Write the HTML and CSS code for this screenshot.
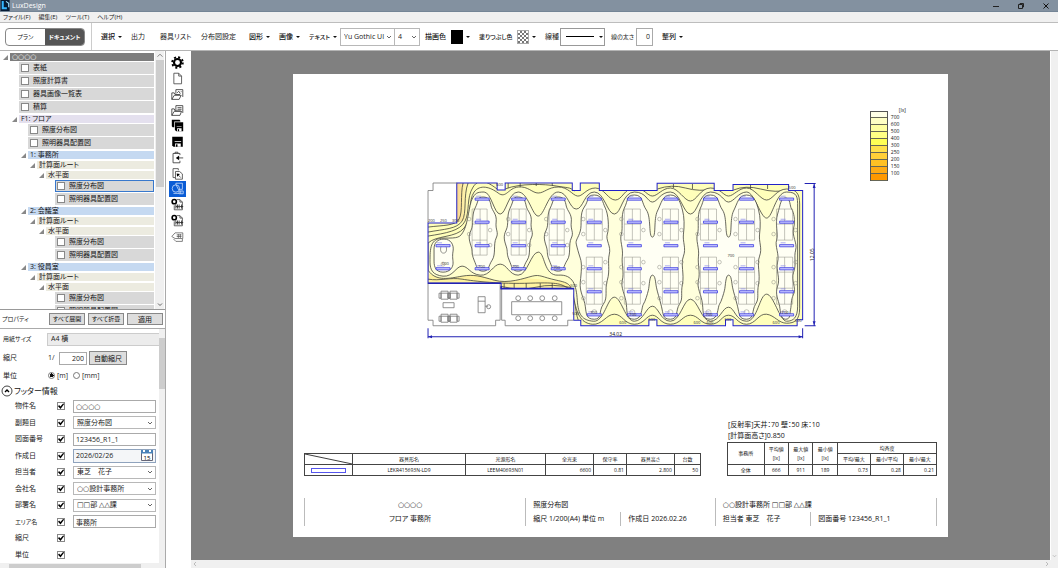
FILE: index.html
```html
<!DOCTYPE html>
<html lang="ja">
<head>
<meta charset="utf-8">
<title>LuxDesign</title>
<link rel="stylesheet" href="styles.css">
</head>
<body>
<svg class="defs" aria-hidden="true">
  <defs>
    <symbol id="chev" viewBox="0 0 6 6"><path d="M1 2l2 2 2-2" fill="none" stroke="#555" stroke-width=".9"/></symbol>
    <symbol id="chev-up" viewBox="0 0 6 6"><path d="M.5 4.2L3 1.7l2.500 2.500" fill="none" stroke="#777" stroke-width=".9"/></symbol>
    <symbol id="gear" viewBox="0 0 16 16"><g fill="none" stroke="#000"><circle cx="8" cy="8" r="4.300" stroke-width="2.600"/><circle cx="8" cy="8" r="6.500" stroke-width="2.400" stroke-dasharray="2.500 2.605"/></g></symbol>
    <symbol id="page" viewBox="0 0 16 16"><path d="M3.500 1.500h6l3.500 3.500v9.500H3.500zM9.500 1.500V5H13" fill="none" stroke="#444"/></symbol>
    <symbol id="folder-img" viewBox="0 0 16 16"><path d="M6 7V2h8.500v9M1 14V6h3l1 2h6M1 14l3-5h8.500l-2.500 5zM7.500 6l2-2 2 3M12 4.500h1" fill="none" stroke="#333"/></symbol>
    <symbol id="folder-doc" viewBox="0 0 16 16"><path d="M6 8V2h8.500v9M8 4.500h5M8 6.500h5M1 14V6h3l1 2.500h7M1 14l3-5h9l-2 5z" fill="none" stroke="#333"/></symbol>
    <symbol id="saves" viewBox="0 0 16 16"><path d="M1 1h9.500l1 1v1H4v7H2L1 9z"/><path d="M4.800 4H15v11H6.500l-1.700-1.500z"/><path d="M7.500 11.500H13V15H7.500zM7 8.500h6v.8H7z" fill="#fff"/><path d="M8.500 12.500H10V15H8.500z"/></symbol>
    <symbol id="save" viewBox="0 0 16 16"><path d="M1.500 2h13v12.500H3L1.500 13z"/><path d="M5 10.500h7v4H5zM4.500 7.500h8v.8h-8z" fill="#fff"/><path d="M6 11.500h2v3H6z"/></symbol>
    <symbol id="import" viewBox="0 0 16 16"><path d="M11 5V3H2.500v11.500H11V12M5 3V1.500h3.500V3M15 8.500H7" fill="none" stroke="#333"/><path d="M6 8.500l4-3v6z"/></symbol>
    <symbol id="export" viewBox="0 0 16 16"><path d="M2.500 13V2H9v2M2.500 13H5M5.500 15V5.500h5l3.500 3V15zM12 13L8.500 9.500" fill="none" stroke="#444"/><path d="M7 8l4 .5L7.500 12z"/></symbol>
    <symbol id="shapes" viewBox="0 0 16 16"><g fill="none" stroke="#dbe9ff" stroke-width=".9"><circle cx="6" cy="8" r="4.500"/><path d="M6 3V1.500h8V9H9zM3 14h7M10 11h5v3.500h-5zM12 11v3.500"/></g></symbol>
    <symbol id="plus-lux" viewBox="0 0 16 16"><circle cx="4" cy="4.500" r="2.600" fill="none" stroke="#000" stroke-width="2"/><path d="M7 2h4l3 3v9.500H4V9M11 2v3h3" fill="none" stroke="#444"/><path d="M6 8v5M8 8v5M10 8v2M10 11v2M13 8v5M6 10.500h9" fill="none" stroke="#222"/></symbol>
    <symbol id="tag" viewBox="0 0 16 16"><path d="M1 8l4-4.500h9.500v7H5zM3 11l3 3h8v-3M7 6h6M7 8h6M9 5v5M11.500 5v5" fill="none" stroke="#555" stroke-width=".9"/></symbol>
  </defs>
</svg>

<header class="titlebar">
  <svg class="logo" viewBox="0 0 11 12"><path d="M0 0h10v12H0z" fill="#061a33"/><path d="M2.500 1v8H7" fill="none" stroke="#35b5ff" stroke-width="2.200"/><path d="M6 1.500l3 2V8" fill="none" stroke="#9fe0ff" stroke-width="1.200"/></svg>
  <span class="title">LuxDesign</span>
  <span class="window-buttons">
    <button aria-label="最小化"><svg viewBox="0 0 8 8"><path d="M1 4.500h6" stroke="#222"/></svg></button>
    <button aria-label="最大化"><svg viewBox="0 0 8 8"><path d="M1.500 2.500h4v4h-4zM3 2.500v-1h3.500V5h-1" fill="none" stroke="#222"/></svg></button>
    <button aria-label="閉じる"><svg viewBox="0 0 8 8"><path d="M1.500 1.500l5 5M6.500 1.500l-5 5" stroke="#111"/></svg></button>
  </span>
</header>

<nav class="menubar">
  <button>ファイル(F)</button><button>編集(E)</button><button>ツール(T)</button><button>ヘルプ(H)</button>
</nav>

<div class="toolbar">
  <div class="mode"><button>プラン</button><button class="on">ドキュメント</button></div>
  <div class="tools">
    <button class="drop strong">選択</button>
    <button>出力</button>
    <button>器具リスト</button>
    <button>分布図設定</button>
    <button class="drop strong">図形</button>
    <button class="drop strong">画像</button>
    <button class="drop strong kana">テキスト</button>
    <span class="combo"><select aria-label="フォント"><option>Yu Gothic UI</option></select><svg><use href="#chev"/></svg></span>
    <span class="combo size"><select aria-label="文字サイズ"><option>4</option></select><svg><use href="#chev"/></svg></span>
    <span class="strong">描画色</span>
    <button class="drop" aria-label="描画色"><i class="swatch black"></i></button>
    <span class="strong kana">塗りつぶし色</span>
    <button class="drop" aria-label="塗りつぶし色"><i class="swatch clear"></i></button>
    <span>線種</span>
    <button class="drop line-kind" aria-label="線種"><i></i></button>
    <label for="weight" class="kana">線の太さ</label>
    <input id="weight" class="field weight" value="0">
    <button class="drop strong">整列</button>
  </div>
</div>

<main class="work">
  <aside class="side">
    <div class="tree-pane">
      <ul class="tree">
        <li><div class="row root open"><span>○○○○</span></div>
          <ul>
            <li><label class="row leaf"><span><input type="checkbox">表紙</span></label></li>
            <li><label class="row leaf"><span><input type="checkbox">照度計算書</span></label></li>
            <li><label class="row leaf"><span><input type="checkbox">器具画像一覧表</span></label></li>
            <li><label class="row leaf"><span><input type="checkbox">積算</span></label></li>
            <li><div class="row open floor"><span>F1: フロア</span></div>
              <ul>
                <li><label class="row leaf"><span><input type="checkbox">照度分布図</span></label></li>
                <li><label class="row leaf"><span><input type="checkbox">照明器具配置図</span></label></li>
                <li><div class="row open room"><span>1: 事務所</span></div>
                  <ul><li><div class="row open plane"><span>計算面ルート</span></div>
                    <ul><li><div class="row open plane"><span>水平面</span></div>
                      <ul>
                        <li><label class="row leaf selected"><span><input type="checkbox">照度分布図</span></label></li>
                        <li><label class="row leaf"><span><input type="checkbox">照明器具配置図</span></label></li>
                      </ul></li></ul></li></ul></li>
                <li><div class="row open room"><span>2: 会議室</span></div>
                  <ul><li><div class="row open plane"><span>計算面ルート</span></div>
                    <ul><li><div class="row open plane"><span>水平面</span></div>
                      <ul>
                        <li><label class="row leaf"><span><input type="checkbox">照度分布図</span></label></li>
                        <li><label class="row leaf"><span><input type="checkbox">照明器具配置図</span></label></li>
                      </ul></li></ul></li></ul></li>
                <li><div class="row open room"><span>3: 役員室</span></div>
                  <ul><li><div class="row open plane"><span>計算面ルート</span></div>
                    <ul><li><div class="row open plane"><span>水平面</span></div>
                      <ul>
                        <li><label class="row leaf"><span><input type="checkbox">照度分布図</span></label></li>
                        <li><label class="row leaf"><span><input type="checkbox">照明器具配置図</span></label></li>
                      </ul></li></ul></li></ul></li>
              </ul></li>
          </ul></li>
      </ul>
      <div class="vscroll"><svg><use href="#chev-up"/></svg><i class="thumb"></i><svg class="end"><use href="#chev"/></svg></div>
    </div>

    <div class="prop-head"><span class="kana">プロパティ</span><button class="btn kana">すべて展開</button><button class="btn kana">すべて折畳</button><button class="btn">適用</button></div>

    <div class="props">
      <form class="form">
        <div class="paper"><label for="paper" class="kana">用紙サイズ</label><select id="paper"><option>A4 横</option></select></div>
        <div class="scale"><label for="scale">縮尺</label><span>1/</span><input id="scale" class="field num" value="200"><button type="button" class="btn">自動縮尺</button></div>
        <div class="unit"><span>単位</span><label><input type="radio" name="unit" checked>[m]</label><label><input type="radio" name="unit">[mm]</label></div>
        <button type="button" class="section"><svg viewBox="0 0 12 12"><circle cx="6" cy="6" r="5" fill="none" stroke="#444"/><path d="M4 7l2-2 2 2" fill="none" stroke="#000" stroke-width="1.400"/></svg>フッター情報</button>
        <div class="fields">
          <label for="c1">物件名</label><input type="checkbox" id="c1" checked><input class="field" aria-label="物件名" value="○○○○">
          <label for="c2">副題目</label><input type="checkbox" id="c2" checked><span class="combo"><select aria-label="副題目"><option>照度分布図</option></select><svg><use href="#chev"/></svg></span>
          <label for="c3">図面番号</label><input type="checkbox" id="c3" checked><input class="field" aria-label="図面番号" value="123456_R1_1">
          <label for="c4">作成日</label><input type="checkbox" id="c4" checked><span class="date"><input aria-label="作成日" value="2026/02/26"><svg viewBox="0 0 12 11"><path d="M.5 1.500h11v9H.5z" fill="#fff" stroke="#667"/><path d="M0 0h12v3.500H0z" fill="#4a82b8"/><path d="M2 0h2v2H2zM8 0h2v2H8z" fill="#fff"/><text x="6" y="9.500" font-size="6" text-anchor="middle">15</text></svg></span>
          <label for="c5">担当者</label><input type="checkbox" id="c5" checked><span class="combo"><select aria-label="担当者"><option>東芝　花子</option></select><svg><use href="#chev"/></svg></span>
          <label for="c6">会社名</label><input type="checkbox" id="c6" checked><span class="combo"><select aria-label="会社名"><option>○○設計事務所</option></select><svg><use href="#chev"/></svg></span>
          <label for="c7">部署名</label><input type="checkbox" id="c7" checked><span class="combo"><select aria-label="部署名"><option>□□部 △△課</option></select><svg><use href="#chev"/></svg></span>
          <label for="c8" class="kana">エリア名</label><input type="checkbox" id="c8" checked><input class="field" aria-label="エリア名" value="事務所">
          <label for="c9">縮尺</label><input type="checkbox" id="c9" checked><span></span>
          <label for="c10">単位</label><input type="checkbox" id="c10" checked><span></span>
        </div>
      </form>
      <div class="form-scroll"><i></i></div>
    </div>
    <div class="side-hscroll"><i></i></div>
  </aside>

  <div class="iconbar">
    <button aria-label="設定"><svg><use href="#gear"/></svg></button>
    <button aria-label="新規"><svg><use href="#page"/></svg></button>
    <button aria-label="画像を開く"><svg><use href="#folder-img"/></svg></button>
    <button aria-label="開く"><svg><use href="#folder-doc"/></svg></button>
    <button aria-label="別名保存"><svg><use href="#saves"/></svg></button>
    <button aria-label="保存"><svg><use href="#save"/></svg></button>
    <button aria-label="取り込み"><svg><use href="#import"/></svg></button>
    <button aria-label="書き出し"><svg><use href="#export"/></svg></button>
    <button aria-label="作図" class="on"><svg><use href="#shapes"/></svg></button>
    <button aria-label="照度追加"><svg><use href="#plus-lux"/></svg></button>
    <button aria-label="表追加"><svg><use href="#plus-lux"/></svg></button>
    <button aria-label="タグ"><svg><use href="#tag"/></svg></button>
  </div>

  <section class="canvas">
    <article class="sheet">
      <div class="legend">
        <div class="bands"><i></i><i></i><i></i><i></i><i></i><i></i><i></i><i></i><i></i><i></i></div>
        <ul><li>700</li><li>600</li><li>500</li><li>400</li><li>300</li><li>250</li><li>200</li><li>150</li><li>100</li></ul>
        <span>[lx]</span>
      </div>

      <svg class="plan" viewBox="420 181 400 161" role="img" aria-label="照度分布図">
        <defs>
          <path id="room" d="M456.700 183H497v7h8v-7h67v7.500h8V183h19v7.500h57.700v-7.200h57V190.500h18.800v-6h55.500v6H802v129h-5.500v6h-64v-6H725v6h-68.500v-6H648.500v6H580.500V320H573.500V288H501V283H428V223h28.700z"/>
          <clipPath id="inside"><use href="#room"/></clipPath>
          <linearGradient id="corner"><stop offset="0" stop-color="#fbcf85"/><stop offset="1" stop-color="#ffffb4" stop-opacity="0"/></linearGradient>
          <g id="lamp"><path d="M-7-1H7V1.200H-7z" fill="#c8c8ff" stroke="#2a2ae0" stroke-width=".7"/><path d="M-6-2.800h5" stroke="#8888ee" stroke-width=".7"/></g>
          <g id="lamps4"><use href="#lamp" y="199"/><use href="#lamp" y="222"/><use href="#lamp" y="245.500"/><use href="#lamp" y="268.500"/></g>
          <g id="lamps6"><use href="#lamps4"/><use href="#lamp" y="291.500"/><use href="#lamp" y="314.500"/></g>
          <g id="desk4"><path d="M-8 209H7v46H-8zM0 209v46M-8 224H7M-8 240H7"/><circle cx="-11" cy="219" r="1.800"/><circle cx="-11" cy="234" r="1.800"/><circle cx="10" cy="230" r="1.800"/><circle cx="10" cy="245" r="1.800"/></g>
          <g id="desk6"><path d="M-8 209H8v31H-8zM0 209v31M-8 224H8M-8 257H8v47H-8zM0 257v47M-8 272H8M-8 288H8"/><circle cx="-11" cy="219" r="1.800"/><circle cx="-11" cy="234" r="1.800"/><circle cx="11" cy="230" r="1.800"/><circle cx="-11" cy="267" r="1.800"/><circle cx="11" cy="262" r="1.800"/><circle cx="-11" cy="282" r="1.800"/><circle cx="11" cy="283" r="1.800"/><circle cx="-11" cy="298" r="1.800"/><circle cx="0" cy="312" r="2.500"/></g>
          <path id="bulb4" d="M0 197C6 197 7 201 8 206S14 214 13 222S16 232 13 238S13 254 9 260S6 271 0 271S-6 267-9 260S-10 252-12 246S-15 236-12 230S-12 216-8 208S-6 197 0 197z"/>
          <g id="armchair"><path d="M1 0H8V8H1zM-1 2H1V7H-1zM8 2h2v5H8zM1 2h7"/></g>
        </defs>

        <use href="#room" fill="#ffffba"/>
        <g clip-path="url(#inside)" stroke="#44443c" stroke-width=".8">
          <path d="M456 183h18l-6 36-12 4z" fill="url(#corner)" stroke="none"/>
          <path d="M428 274L480 274 560 281 572 284V290H500L498 284H428z" fill="#fff3a0" stroke="none"/>
          <g fill="none">
            <path d="M428 227C444 225 455 226 459 219S460 194 463 183"/>
            <path d="M428 232C444 229 457 229 462 221S463 196 468 183"/>
            <path d="M428 236C446 233 460 231 465 221S466 198 473 187S490 184 497 189M505 189C520 183 545 184 556 186S570 187 574 191"/>
            <path d="M428 279C440 281 450 277 462 279S500 284 530 283S560 284 568 288S574 310 578 320"/>
            <path d="M500 286q20 5 36 1t38 1M508 183v5M520 183v4M536 183v3M552 183v3M504 283v5M514 283v5M526 283v5M540 283v5M552 283v5"/>
            <path d="M657 189q14-5 28-1t29 1M733 190q12-5 27-1t28 1M673 184v4M692 184v5M750 185v4M767 185v4"/>
          </g>
          <path fill="#ffffcb" d="M428 243C436 235 456 238 464 228S468 200 474 192S490 187 498 193S508 188 518 187S532 193 538 193S548 187 558 187S572 195 577 196S586 188 595 188S608 200 615 200S624 188 634 188S647 196 652 196S662 188 670 188S684 201 690 201S700 188 710 188S723 196 728 196S738 188 746 188S760 200 766 200S776 189 786 189S799 194 799 204V308C799 320 794 323 786 323S774 315 766 314S755 324 746 324S735 315 728 315S720 324 710 324S698 315 690 315S680 324 670 324S658 315 652 315S644 324 634 324S622 314 614 314S602 325 592 324S577 316 574 300S570 283 556 280S540 274 532 276S508 284 494 280S474 274 462 276S436 282 428 270z"/>
          <path fill="#ffffdc" d="M430 262C430 248 430 238 444 238S460 238 464 230S469 205 472 199S477 192 484 192S494 214 500 214S508 192 518 192S532 216 538 216S548 192 558 192S569 209 576 209S584 192 594 192S607 214 614 214S622 192 634 192S647 202 652 202S660 192 670 192S683 214 690 214S699 192 710 192S723 202 728 202S738 192 746 192S760 218 766 218S775 192 786 192S797 197 797 207V306C797 317 793 321 786 321S773 294 766 294S757 321 746 321S734 307 728 307S719 321 710 321S697 299 690 299S680 321 670 321S658 306 652 306S643 321 634 321S621 297 614 297S604 322 593 321S578 315 577 300S573 274 558 275S545 252 538 252S527 275 518 275S507 264 500 264S490 276 480 275S468 266 462 266S453 277 443 276S430 270 430 262z"/>
          <g fill="#fffff4">
            <path d="M444 239C451 239 454 245 453 251S453 259 453 263S450 272 443 272S434 267 434 261V249C434 243 437 239 444 239z"/>
            <use href="#bulb4" x="483"/><use href="#bulb4" x="518"/><use href="#bulb4" x="558"/>
            <path d="M594 195C602 195 602 202 605 208S609 228 607 234S611 246 609 254S610 270 607 280S608 297 603 304S602 319 594 319S586 314 585 306S579 292 580 282S582 264 580 258S577 248 576 244S578 238 580 231S579 214 584 207S586 195 594 195z"/>
            <path id="pair" d="M634 195C643 195 641 203 646 210S648 237 652 237S653 219 657 211S662 195 670 195S680 203 682 210S684 226 683 234S686 248 683 256S684 274 682 284S683 298 679 304S678 319 670 319S663 314 661 306S657 292 656 287S655 275 652 275S649 286 648 290S645 301 643 304S642 319 634 319S627 314 626 304S620 288 622 280S621 264 622 256S619 240 621 234S620 216 624 208S626 195 634 195z"/>
            <use href="#pair" x="76"/>
            <path d="M785 198C790 198 789 206 791 209S795 220 793 228S797 243 795 250S796 264 793 272S796 288 793 294S791 304 790 309S790 319 785 319S780 312 779 306S774 294 777 286S775 270 777 262S774 246 776 240S774 224 777 214S780 198 785 198z"/>
          </g>
        </g>
        <g fill="none" stroke="#8b8b83" stroke-width=".5">
          <use href="#desk4" x="480"/><use href="#desk4" x="519"/><use href="#desk4" x="557"/>
          <use href="#desk6" x="594"/><use href="#desk6" x="632"/><use href="#desk6" x="670"/><use href="#desk6" x="708"/><use href="#desk6" x="746"/><use href="#desk6" x="784"/>
          <ellipse cx="443.500" cy="249" rx="3" ry="4" stroke="#333"/><circle cx="443" cy="264" r="2"/>
        </g>
        <use href="#lamp" x="443" y="245.500"/><use href="#lamp" x="443" y="268.500"/>
        <use href="#lamps4" x="482"/><use href="#lamps4" x="518.500"/><use href="#lamps4" x="558"/>
        <use href="#lamps6" x="594"/><use href="#lamps6" x="634"/><use href="#lamps6" x="670.500"/><use href="#lamps6" x="710"/><use href="#lamps6" x="746"/><use href="#lamps6" x="786"/>
        <use href="#room" fill="none" stroke="#2222c8" stroke-width="1"/>

        <g fill="none" stroke="#777" stroke-width=".8">
          <path d="M428 223V190.500h5V183h24M428 283v37h5v5.500h62.500V320h4.500V284M501.500 288v32h3.500v5.500h62.500V320h5.500"/>
          <use href="#armchair" x="440" y="291"/><use href="#armchair" x="449" y="291"/><use href="#armchair" x="440" y="314"/><use href="#armchair" x="449" y="314"/>
          <path d="M443 302.500h11v5H443zM478 296.500h7v16h-7zM478 301h7M485 306h3M511.500 301.500h50v13h-50z"/>
          <circle cx="488.500" cy="306.500" r="2"/>
          <g id="seats"><circle cx="518" cy="298" r="2.400"/><circle cx="530" cy="298" r="2.400"/><circle cx="542" cy="298" r="2.400"/><circle cx="554.500" cy="298" r="2.400"/></g>
          <use href="#seats" y="20"/>
        </g>
        <g fill="none" stroke="#2222b4"><path d="M428 328v10M802 328v10M428 336.500h374M804 183.500h11M804 325.500h11M813.500 184v141"/><path d="M501 286v2.500h72.500M428 283h73" stroke-width="1.500"/></g>
        <path d="M428 336.500l4-1.500v3zM802 336.500l-4-1.500v3zM813.500 184l-1.500 4h3zM813.500 325l-1.500-4h3z" fill="#2222b4"/>
        <g class="plan-text">
          <text x="609" y="336">34.02</text>
          <text transform="translate(813 261) rotate(-90)">12.05</text>
        </g>
        <g class="plan-mark">
          <text x="428" y="222">200</text><text x="440" y="222">250</text><text x="452" y="222">300</text>
          <text x="496" y="186">600</text><text x="788" y="189">500</text><text x="442" y="265">600</text>
          <text x="478" y="268">700</text><text x="512" y="268">700</text><text x="553" y="269">700</text>
          <text x="727" y="257">700</text><text x="590" y="314">700</text><text x="629" y="316">700</text><text x="705" y="316">700</text><text x="781" y="314">700</text>
          <text x="619" y="324">600</text><text x="648" y="321">500</text><text x="693" y="324">600</text><text x="706" y="324">600</text><text x="724" y="321">500</text><text x="772" y="324">600</text><text x="794" y="322">500</text><text x="570" y="287">500</text><text x="572" y="315">500</text>
        </g>
      </svg>

      <div class="notes"><p>[反射率]天井：70 壁：50 床：10</p><p>[計算面高さ]0.850</p></div>

      <div class="tables">
        <table class="lamp-table">
          <colgroup><col style="width:12.200%"><col style="width:28.400%"><col style="width:20.300%"><col style="width:12.100%"><col style="width:8.300%"><col style="width:12.100%"><col style="width:6.600%"></colgroup>
          <tr><th class="slash"><svg viewBox="0 0 48 11" preserveAspectRatio="none"><path d="M0 0l48 11" stroke="#333"/></svg></th><th>器具形名</th><th>光源形名</th><th>全光束</th><th>保守率</th><th>器具高さ</th><th>台数</th></tr>
          <tr><td><i class="fixture"></i></td><td>LEKR415693N-LD9</td><td>LEEM40693N01</td><td class="r">6600</td><td class="r">0.81</td><td class="r">2.800</td><td class="r">50</td></tr>
        </table>
        <table class="lux-table">
          <colgroup><col style="width:17.500%"><col style="width:11.700%"><col style="width:11.700%"><col style="width:11.700%"><col style="width:15.800%"><col style="width:15.800%"><col style="width:15.800%"></colgroup>
          <tr><th rowspan="2">事務所</th><th rowspan="2">平均値<br>[lx]</th><th rowspan="2">最大値<br>[lx]</th><th rowspan="2">最小値<br>[lx]</th><th colspan="3">均斉度</th></tr>
          <tr><th>平均/最大</th><th>最小/平均</th><th>最小/最大</th></tr>
          <tr><td>全体</td><td>666</td><td>911</td><td>189</td><td class="r">0.73</td><td class="r">0.28</td><td class="r">0.21</td></tr>
        </table>
      </div>

      <footer class="sheet-foot">
        <div class="center"><p>○○○○</p><p>フロア 事務所</p></div>
        <div><p>照度分布図</p><p class="split"><span>縮尺 1/200(A4) 単位 m</span><span>作成日 2026.02.26</span></p></div>
        <div><p>○○設計事務所 □□部 △△課</p><p class="split author"><span>担当者 東芝　花子</span><span>図面番号 123456_R1_1</span></p></div>
      </footer>
    </article>
  </section>
  <div class="canvas-v"><svg><use href="#chev"/></svg></div>
  <div class="canvas-h"><svg viewBox="0 0 6 6"><path d="M4 1L2 3l2 2" fill="none" stroke="#bbb"/></svg><svg viewBox="0 0 6 6"><path d="M2 1l2 2-2 2" fill="none" stroke="#bbb"/></svg></div>
</main>
</body>
</html>
```
FILE: styles.css
```css
* { box-sizing: border-box; }
body {
  margin: 0;
  height: 100vh;
  display: flex;
  flex-direction: column;
  overflow: hidden;
  background: #fff;
  color: #222;
  font: 7px/10px "Open Sans", "DejaVu Sans", "Noto Sans CJK JP", sans-serif;
  font-feature-settings: "palt";
}
ul, p { margin: 0; padding: 0; list-style: none; }
button, input, select {
  font: inherit;
  font-feature-settings: inherit;
  color: inherit;
  margin: 0;
  padding: 0;
  border: 0;
  background: none;
  border-radius: 0;
  appearance: none;
  min-width: 0;
}
.defs { position: absolute; width: 0; height: 0; }

/* window frame */
.titlebar { display: flex; align-items: center; height: 12px; background: #8391a0; border-bottom: 1px solid #748596; color: #fff; }
.logo { width: 11px; height: 11px; }
.title { margin-left: 1px; }
.window-buttons { margin-left: auto; display: flex; gap: 17px; padding-right: 8px; }
.window-buttons button { width: 8px; height: 8px; display: flex; }
.menubar { display: flex; gap: 8px; height: 11px; padding-left: 3px; background: #f0f0f0; border-bottom: 1px solid #bdbdbd; font-size: 6px; line-height: 9px; }

/* toolbar */
.toolbar { display: flex; align-items: center; height: 28px; border-bottom: 1px solid #b4b4b4; padding-left: 5px; }
.mode { display: flex; height: 18px; width: 80px; border: 1px solid #888; border-radius: 4px; overflow: hidden; font-size: 6px; }
.mode button { flex: 1; }
.mode .on { background: #555; color: #fff; font-weight: 700; }
.tools {
  align-self: stretch;
  display: grid;
  grid-template-columns: 30px 29px 41px 48px 30px 30px 31px 55px 30px 26px 28px 38px 28px 15px 51px 25px 26px 30px;
  align-items: center;
  margin-left: 6px;
  padding-left: 9px;
  border-left: 1px solid #ccc;
  white-space: nowrap;
}
.tools > button { text-align: left; }
.tools > .strong { color: #111; font-weight: 500; }
.kana, .tools > .kana { font-size: 6px; }
.drop { display: flex; align-items: center; gap: 3px; }
.drop::after { content: ""; border: 2px solid transparent; border-top-color: #111; border-bottom: 0; }
.swatch { width: 12px; height: 14px; }
.black { background: #000; }
.clear { border: 1px solid #aaa; background: repeating-conic-gradient(#777 0 25%, #fff 0 50%) 0 0 / 4px 4px; }
.combo { display: flex; align-items: center; height: 13px; border: 1px solid #b8b8b8; background: #fff; padding-right: 2px; }
.combo select { flex: 1; padding-left: 3px; }
.combo svg { width: 6px; height: 6px; }
.tools .combo { height: 18px; }
.tools .size { width: 25px; border-left: 0; }
.line-kind { width: 45px; height: 18px; border: 1px solid #999; }
.line-kind i { width: 28px; height: 1px; background: #000; margin: 0 2px 0 5px; flex: none; }
.line-kind::after { flex: none; }
.field { height: 13px; border: 1px solid #aaa; background: #fff; padding: 0 2px; width: 100%; }
.weight { width: 17px; height: 18px; text-align: right; }

/* work area */
.work { flex: 1; min-height: 0; display: grid; grid-template-columns: 166px 25px 1fr 8px; grid-template-rows: 1fr 8px; }
.side { grid-row: 1 / 3; min-height: 0; display: flex; flex-direction: column; border-right: 1px solid #aaa; }

.tree-pane { flex: none; height: 259px; display: flex; overflow: hidden; border-bottom: 1px solid #999; }
.tree { flex: 1; padding-left: 2px; }
.tree ul { padding-left: 9px; }
.row { display: grid; grid-template-columns: 8px 1fr; align-items: end; height: 10px; padding-right: 1px; }
.row > span { grid-column: 2; display: flex; align-items: center; height: 8px; padding-left: 2px; line-height: 8px; white-space: nowrap; color: #111; }
.open::before { content: ""; width: 5px; height: 5px; margin: 0 0 1px 1px; background: #888; clip-path: polygon(100% 0, 100% 100%, 0 100%); }
.root > span { background: #7d7d7d; color: #fff; }
.floor > span { background: #e4e0ee; }
.room > span { background: #c5d9f1; }
.plane > span { background: #ecebe0; }
.leaf { height: 13px; align-items: center; }
.leaf > span { height: 12px; background: #d8d8d8; }
.leaf.selected > span { border: 1px solid #3878cc; padding-left: 1px; }
input[type="checkbox"] { width: 8px; height: 8px; border: 1px solid #888; background: #fff; }
.leaf input { margin-right: 4px; flex: none; }
.vscroll { width: 9px; background: #f0f0f0; display: flex; flex-direction: column; align-items: center; margin-right: 1px; }
.vscroll svg { width: 6px; height: 9px; flex: none; }
.thumb { width: 8px; height: 127px; background: #cdcdcd; }
.vscroll .end { margin-top: auto; }

.prop-head { flex: none; display: grid; grid-template-columns: 44px 36px 36px 36px; column-gap: 3px; align-items: center; height: 19px; padding-left: 2px; border-bottom: 1px solid #aaa; }
.btn { height: 12px; border: 1px solid #888; background: #ddd; color: #111; white-space: nowrap; text-align: center; line-height: 9px; }

.props { flex: 1; min-height: 0; display: flex; }
.form { flex: 1; display: flex; flex-direction: column; }
.paper, .scale, .unit { display: flex; align-items: center; padding-left: 3px; flex: none; }
.paper { height: 20px; }
.paper label { width: 44px; }
.paper select { flex: 1; height: 13px; border: 1px solid #ccc; border-right: 0; background: #ececec; padding-left: 3px; }
.scale { height: 18px; }
.scale label { width: 45px; }
.scale span { width: 11px; }
.scale .num { width: 28px; text-align: right; margin-right: 2px; }
.scale .btn { width: 38px; height: 14px; }
.unit { height: 17px; }
.unit span { width: 45px; }
.unit label { display: flex; align-items: center; gap: 2px; margin-right: 5px; }
.unit input { width: 7px; height: 7px; border: 1px solid #777; border-radius: 50%; background: #fff; }
.unit input:checked { background: radial-gradient(circle, #111 0 2px, #fff 2px); }
.section { display: flex; align-items: center; gap: 1px; height: 14px; padding-left: 1px; font-size: 8px; color: #111; flex: none; }
.section svg { width: 12px; height: 12px; }
.fields { flex: 1; display: grid; grid-template-columns: 42px 16px 83px; grid-auto-rows: 1fr; align-items: center; padding-left: 15px; }
.fields input:checked { background: #fff; display: grid; }
.fields input:checked::before { content: ""; background: #000; clip-path: polygon(0 50%, 18% 30%, 40% 55%, 88% 0, 100% 18%, 42% 95%); }
.date { display: flex; align-items: center; justify-content: space-between; height: 14px; border: 1px solid #8fa3bd; background: #f4f6f8; padding: 0 2px; }
.date input { width: 50px; }
.date svg { width: 12px; height: 11px; }
.form-scroll { width: 6px; background: #f0f0f0; padding-top: 9px; }
.form-scroll i { display: block; height: 51px; background: #cdcdcd; }
.side-hscroll { flex: none; height: 5px; background: #f0f0f0; padding: 1px 24px 0 9px; }
.side-hscroll i { display: block; height: 4px; background: #cdcdcd; }

.iconbar { grid-row: 1 / 3; display: grid; grid-template-rows: repeat(12, 1fr); align-self: start; height: 189px; margin-top: 4px; justify-content: center; padding-right: 2px; }
.iconbar button { width: 17px; display: grid; place-items: center; }
.iconbar svg { width: 13px; height: 13px; }
.iconbar .on { background: #0a5cd5; }

.canvas { background: #808080; display: flex; padding: 23px 102px; min-width: 0; min-height: 0; }
.canvas-v { background: #f0f0f0; display: flex; align-items: flex-end; padding: 1px; border-left: 1px solid #fff; }
.canvas-v svg { width: 6px; height: 6px; opacity: .4; }
.canvas-h { grid-column: 3 / 5; background: #f0f0f0; display: flex; justify-content: space-between; align-items: center; padding: 0 8px 0 1px; }
.canvas-h svg { width: 6px; height: 6px; }

/* drawing sheet */
.sheet { flex: 1; min-width: 0; background: #fff; display: flex; flex-direction: column; padding: 33px 11px 11px; color: #111; }
.legend { display: flex; align-self: flex-end; margin-right: 31px; font-size: 5px; line-height: 7px; }
.bands { width: 18px; margin-top: 4px; border: 1px solid #555; border-bottom: 0; }
.bands i { display: block; height: 7px; border-bottom: 1px solid #665; background: #ff9800; }
.bands i:nth-child(1) { background: #ffffe6; height: 6px; }
.bands i:nth-child(2) { background: #ffffc4; }
.bands i:nth-child(3) { background: #ffffa0; }
.bands i:nth-child(4) { background: #ffff85; }
.bands i:nth-child(5) { background: #ffff55; }
.bands i:nth-child(6) { background: #ffe04a; }
.bands i:nth-child(7) { background: #ffcf38; }
.bands i:nth-child(8) { background: #ffc024; }
.bands i:nth-child(9) { background: #ffaa14; }
.legend ul { margin: 7px 0 0 3px; width: 8px; }
.plan { display: block; width: 63.3%; margin: 0 0 0 116px; }
.plan-text { font-size: 5px; fill: #111; }
.plan-mark { font-size: 4px; fill: #333; }

.notes { margin: auto 0 1px auto; width: 209px; line-height: 11px; font-size: 7px; }
.tables { display: flex; justify-content: space-between; align-items: flex-end; }
table { border-collapse: collapse; table-layout: fixed; font-size: 5px; line-height: 9px; }
.lamp-table { width: 397px; }
.lux-table { width: 210px; }
th, td { border: 1px solid #444; padding: 0 2px; height: 11px; font-weight: 400; text-align: center; white-space: nowrap; }
.r { text-align: right; }
.slash { padding: 0; }
.slash svg { display: block; width: 100%; height: 10px; }
.fixture { display: block; width: 35px; height: 5px; margin: 0 auto; border: 1px solid #5555ee; }

.sheet-foot { display: grid; grid-template-columns: 35% 30% 35%; margin-top: 22px; border-right: 1px solid #bbb; line-height: 14px; white-space: nowrap; }
.sheet-foot > div { border-left: 1px solid #bbb; padding-left: 7px; }
.sheet-foot .center { text-align: center; padding: 0 10px 0 0; }
.split { display: grid; grid-template-columns: 48% 1fr; }
.author { grid-template-columns: 41% 1fr; }
.split span + span { border-left: 1px solid #bbb; padding-left: 7px; }
```
